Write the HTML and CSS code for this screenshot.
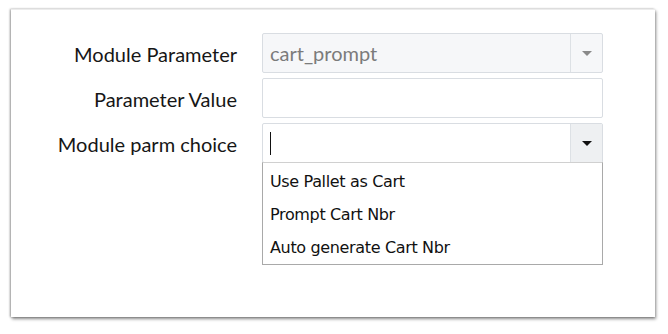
FILE: index.html
```html
<!DOCTYPE html>
<html>
<head>
<meta charset="utf-8">
<link rel="stylesheet" href="styles.css">
</head>
<body>
<div class="panel">
  <div class="form">
    <label class="label">Module Parameter</label>
    <div class="field select disabled">
      <span class="value">cart_prompt</span>
      <span class="btn"><span class="caret"></span></span>
    </div>
    <label class="label">Parameter Value</label>
    <div class="field text"></div>
    <label class="label">Module parm choice</label>
    <div class="combo">
      <div class="field select active">
        <span class="value"><span class="cursor"></span></span>
        <span class="btn"><span class="caret"></span></span>
      </div>
      <ul class="menu">
        <li>Use Pallet as Cart</li>
        <li>Prompt Cart Nbr</li>
        <li>Auto generate Cart Nbr</li>
      </ul>
    </div>
  </div>
</div>
</body>
</html>
```
FILE: styles.css
```css
html, body { margin: 0; padding: 0; background: #fff; }
body { width: 668px; height: 334px; overflow: hidden; }
.panel {
  margin: 9px 0 0 11px;
  width: 644px;
  height: 308px;
  box-sizing: border-box;
  background: #fff;
  border-top: 1px solid #ececec;
  box-shadow: 1px 2px 3px rgba(0,0,0,0.45), -1px 0 2px rgba(0,0,0,0.35);
  padding: 23px 0 0 0;
}
.form {
  display: grid;
  grid-template-columns: 226px 341px;
  column-gap: 25px;
  row-gap: 5px;
  align-items: center;
}
.label {
  font-family: Lato, "Liberation Sans", sans-serif;
  font-size: 20px;
  color: #161616;
  text-align: right;
  padding-top: 2px;
}
.field {
  height: 40px;
  box-sizing: border-box;
  border: 1px solid #d9dde2;
  border-radius: 2px;
  background: #fff;
  display: flex;
  align-items: stretch;
}
.combo { position: relative; height: 40px; }
.value {
  flex: 1;
  display: flex;
  align-items: center;
  padding-left: 7px;
  font-family: Lato, "Liberation Sans", sans-serif;
  font-size: 20px;
}
.disabled { background: #f6f7f9; }
.disabled .value { color: #7b7b7b; }
.btn {
  width: 31px;
  border-left: 1px solid #dde1e5;
  display: flex;
  align-items: center;
  justify-content: center;
}
.caret {
  width: 0; height: 0;
  border-left: 5px solid transparent;
  border-right: 5px solid transparent;
  border-top: 5px solid #8a8a8a;
}
.active .btn { background: #eef0f2; }
.active .caret { border-top-color: #111; }
.cursor {
  display: block;
  width: 1px;
  height: 23px;
  background: #111;
}
.menu {
  position: absolute;
  left: 0;
  top: 39px;
  width: 341px;
  box-sizing: border-box;
  margin: 0;
  padding: 2px 0 0 0;
  list-style: none;
  background: #fff;
  border: 1px solid #a9a9a9;
  border-top-color: #d0d0d0;
}
.menu li {
  height: 33px;
  line-height: 33px;
  padding-left: 7px;
  font-family: "DejaVu Sans", sans-serif;
  font-size: 16px;
  color: #111;
  letter-spacing: -0.35px;
}
```
